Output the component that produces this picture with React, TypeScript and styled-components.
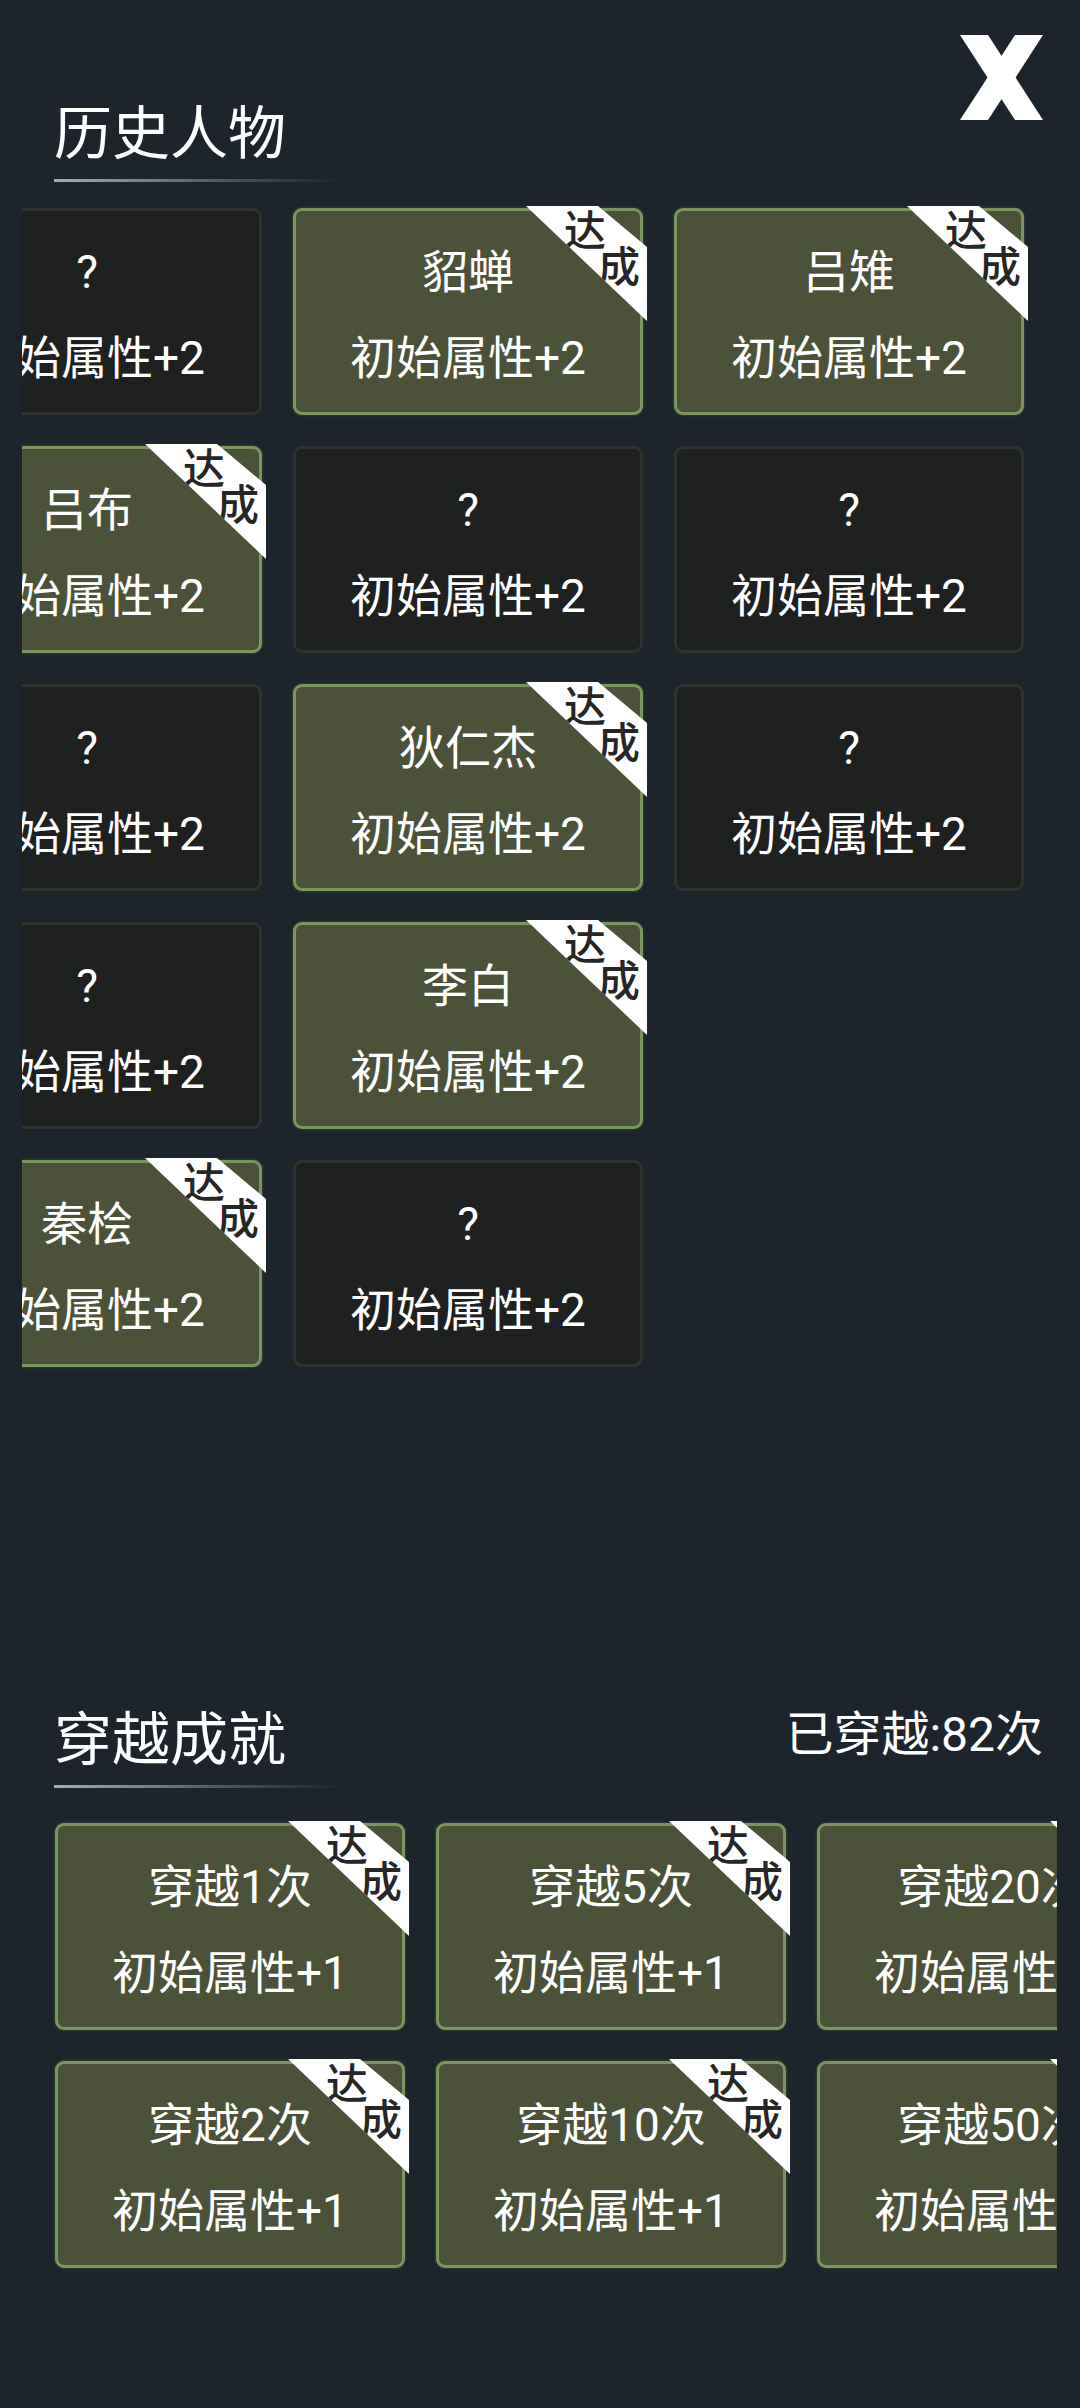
import React, { FC, useLayoutEffect, useRef } from 'react';
import styled, { createGlobalStyle } from 'styled-components';

const GlobalStyle = createGlobalStyle`
  html, body {
    margin: 0;
    padding: 0;
    background: #1d242c;
  }
  body {
    font-family: Roboto, "Noto Sans CJK SC", sans-serif;
    color: #ffffff;
  }
`;

const Page = styled.div`
  position: relative;
  box-sizing: border-box;
  width: 1080px;
  min-height: 2408px;
  padding-top: 100px;
  background: #1d242c;
`;

const CloseButton = styled.button`
  position: absolute;
  top: 35px;
  right: 36px;
  width: 85px;
  height: 85px;
  padding: 0;
  border: 0;
  background: none;
  cursor: pointer;
`;

const Section = styled.section<{ gapTop: number }>`
  margin-top: ${({ gapTop }) => gapTop}px;
`;

const SectionHead = styled.div`
  display: flex;
  align-items: center;
  justify-content: space-between;
  padding: 0 37px 0 54px;
`;

const Title = styled.h2`
  margin: 0;
  font-family: "Noto Sans CJK SC", sans-serif;
  font-size: 58px;
  line-height: 58px;
  font-weight: 400;
  color: #ffffff;
`;

const Counter = styled.div`
  font-size: 48px;
  line-height: 58px;
  color: #ffffff;
  white-space: nowrap;
`;

const Underline = styled.div`
  margin: 21px 0 0 54px;
  width: 287px;
  height: 3px;
  background: linear-gradient(90deg, #a6acb3 0%, rgba(140, 146, 154, 0.45) 60%, rgba(140, 146, 154, 0));
`;

const Scroller = styled.div<{ gapTop: number }>`
  margin: ${({ gapTop }) => gapTop}px 0 0 22px;
  width: 1035px;
  overflow-x: auto;
  overflow-y: hidden;
  scrollbar-width: none;
  &::-webkit-scrollbar {
    display: none;
  }
`;

const Grid = styled.div<{ rows: number }>`
  display: grid;
  grid-template-rows: repeat(${({ rows }) => rows}, 207px);
  grid-auto-flow: column;
  grid-auto-columns: 350px;
  gap: 31px;
  width: max-content;
  padding: 4px 33px;
`;

const Card = styled.div<{ done: boolean }>`
  position: relative;
  box-sizing: border-box;
  width: 350px;
  height: 207px;
  border-radius: 9px;
  border: 3px solid ${({ done }) => (done ? '#7a955f' : '#2e332d')};
  background: ${({ done }) => (done ? '#4b5239' : '#1f2020')};
  box-shadow: ${({ done }) => (done ? '0 0 3px rgba(80, 130, 50, 0.6)' : 'none')};
  display: flex;
  flex-direction: column;
  align-items: center;
`;

const CardName = styled.div`
  margin-top: 36px;
  font-size: 46px;
  line-height: 50px;
  white-space: nowrap;
`;

const CardReward = styled.div`
  margin-top: 36px;
  font-size: 46px;
  line-height: 50px;
  white-space: nowrap;
`;

const Ribbon = styled.div`
  position: absolute;
  top: -5px;
  right: -7px;
  width: 121px;
  height: 115px;
  background: #ffffff;
  clip-path: polygon(0 0, 72px 0, 100% 41px, 100% 100%);
  font-family: "Noto Sans CJK SC", sans-serif;
  font-size: 42px;
  line-height: 42px;
  font-weight: 500;
  color: #262626;
`;

const RibbonChar = styled.span<{ left: number; top: number }>`
  position: absolute;
  left: ${({ left }) => left}px;
  top: ${({ top }) => top}px;
`;

interface Item {
  name: string;
  done: boolean;
}

const people: Item[] = [
  { name: '?', done: false },
  { name: '吕布', done: true },
  { name: '?', done: false },
  { name: '?', done: false },
  { name: '秦桧', done: true },
  { name: '貂蝉', done: true },
  { name: '?', done: false },
  { name: '狄仁杰', done: true },
  { name: '李白', done: true },
  { name: '?', done: false },
  { name: '吕雉', done: true },
  { name: '?', done: false },
  { name: '?', done: false },
];

const travels: Item[] = [1, 2, 5, 10, 20, 50, 100, 200].map((n) => ({ name: `穿越${n}次`, done: n <= 82 }));

const CloseIcon = () => (
  <svg width="85" height="85" viewBox="0 0 85 85">
    <polygon points="1,0 29,0 84,85 56,85" fill="#ffffff" />
    <polygon points="56,0 84,0 29,85 1,85" fill="#ffffff" />
  </svg>
);

const AchievementCard: FC<{ item: Item; reward: string }> = ({ item, reward }) => (
  <Card done={item.done}>
    <CardName>{item.name}</CardName>
    <CardReward>{reward}</CardReward>
    {item.done && (
      <Ribbon>
        <RibbonChar left={38} top={1}>达</RibbonChar>
        <RibbonChar left={72} top={37}>成</RibbonChar>
      </Ribbon>
    )}
  </Card>
);

const CardStrip: FC<{ items: Item[]; rows: number; reward: string; gapTop: number; scrollToEnd?: boolean }> = ({
  items,
  rows,
  reward,
  gapTop,
  scrollToEnd,
}) => {
  const ref = useRef<HTMLDivElement>(null);

  useLayoutEffect(() => {
    if (scrollToEnd && ref.current) ref.current.scrollLeft = ref.current.scrollWidth;
  }, [scrollToEnd]);

  return (
    <Scroller ref={ref} gapTop={gapTop}>
      <Grid rows={rows}>
        {items.map((item, i) => (
          <AchievementCard key={i} item={item} reward={reward} />
        ))}
      </Grid>
    </Scroller>
  );
};

const App: FC = () => {
  return (
    <Page>
      <GlobalStyle />
      <CloseButton aria-label="关闭">
        <CloseIcon />
      </CloseButton>

      <Section gapTop={0}>
        <SectionHead>
          <Title>历史人物</Title>
        </SectionHead>
        <Underline />
        <CardStrip items={people} rows={5} reward="初始属性+2" gapTop={22} scrollToEnd />
      </Section>

      <Section gapTop={335}>
        <SectionHead>
          <Title>穿越成就</Title>
          <Counter>已穿越:82次</Counter>
        </SectionHead>
        <Underline />
        <CardStrip items={travels} rows={2} reward="初始属性+1" gapTop={31} />
      </Section>
    </Page>
  );
};

export default App;
